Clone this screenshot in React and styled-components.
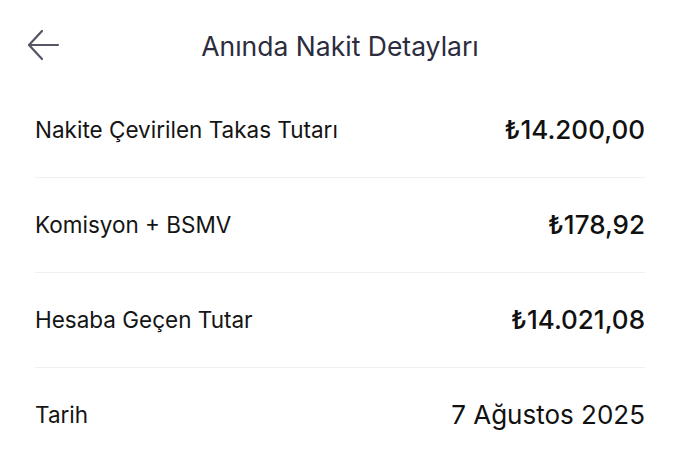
import React from "react";
import styled, { createGlobalStyle } from "styled-components";

const Global = createGlobalStyle`
  html, body { margin: 0; padding: 0; background: #fff; }
  body { font-family: Inter, "Noto Sans", sans-serif; -webkit-font-smoothing: antialiased; }
`;

const Page = styled.div`
  width: 680px;
  height: 454px;
  background: #fff;
  overflow: hidden;
`;

const Header = styled.header`
  position: relative;
  height: 83px;
  display: flex;
  align-items: center;
  justify-content: center;
`;

const BackButton = styled.button`
  position: absolute;
  left: 24px;
  top: 26px;
  width: 38px;
  height: 38px;
  padding: 0;
  border: none;
  background: transparent;
  display: flex;
  align-items: center;
  justify-content: center;
`;

const Title = styled.h1`
  margin: 0;
  margin-top: 8px;
  font-family: Inter, sans-serif;
  font-size: 26.5px;
  font-weight: 400;
  color: #2b2c3d;
`;

const List = styled.div`
  padding: 0 35px;
  display: flex;
  flex-direction: column;
`;

const Row = styled.div`
  height: 95px;
  box-sizing: border-box;
  display: flex;
  align-items: center;
  justify-content: space-between;
  border-bottom: ${(p) => (p.$last ? "none" : "1.5px solid #f0f0f2")};
  padding-bottom: 2px;
`;

const Label = styled.span`
  font-size: 22.5px;
  color: #141414;
  font-weight: 400;
`;

const Value = styled.span`
  font-size: 26px;
  color: #111;
  font-weight: ${(p) => (p.$plain ? 400 : 500)};
`;

const rows = [
  { label: "Nakite Çevirilen Takas Tutarı", value: "₺14.200,00" },
  { label: "Komisyon + BSMV", value: "₺178,92" },
  { label: "Hesaba Geçen Tutar", value: "₺14.021,08" },
  { label: "Tarih", value: "7 Ağustos 2025", plain: true },
];

export default function App() {
  return (
    <Page>
      <Global />
      <Header>
        <BackButton aria-label="Geri">
          <svg width="34" height="34" viewBox="0 0 34 34" fill="none">
            <path d="M32 19H4M16 5L3 19l13 14" stroke="#555566" strokeWidth="2.2" strokeLinecap="round" strokeLinejoin="round" transform="translate(0,-2)" />
          </svg>
        </BackButton>
        <Title>Anında Nakit Detayları</Title>
      </Header>
      <List>
        {rows.map((r, i) => (
          <Row key={r.label} $last={i === rows.length - 1}>
            <Label>{r.label}</Label>
            <Value $plain={r.plain}>{r.value}</Value>
          </Row>
        ))}
      </List>
    </Page>
  );
}
